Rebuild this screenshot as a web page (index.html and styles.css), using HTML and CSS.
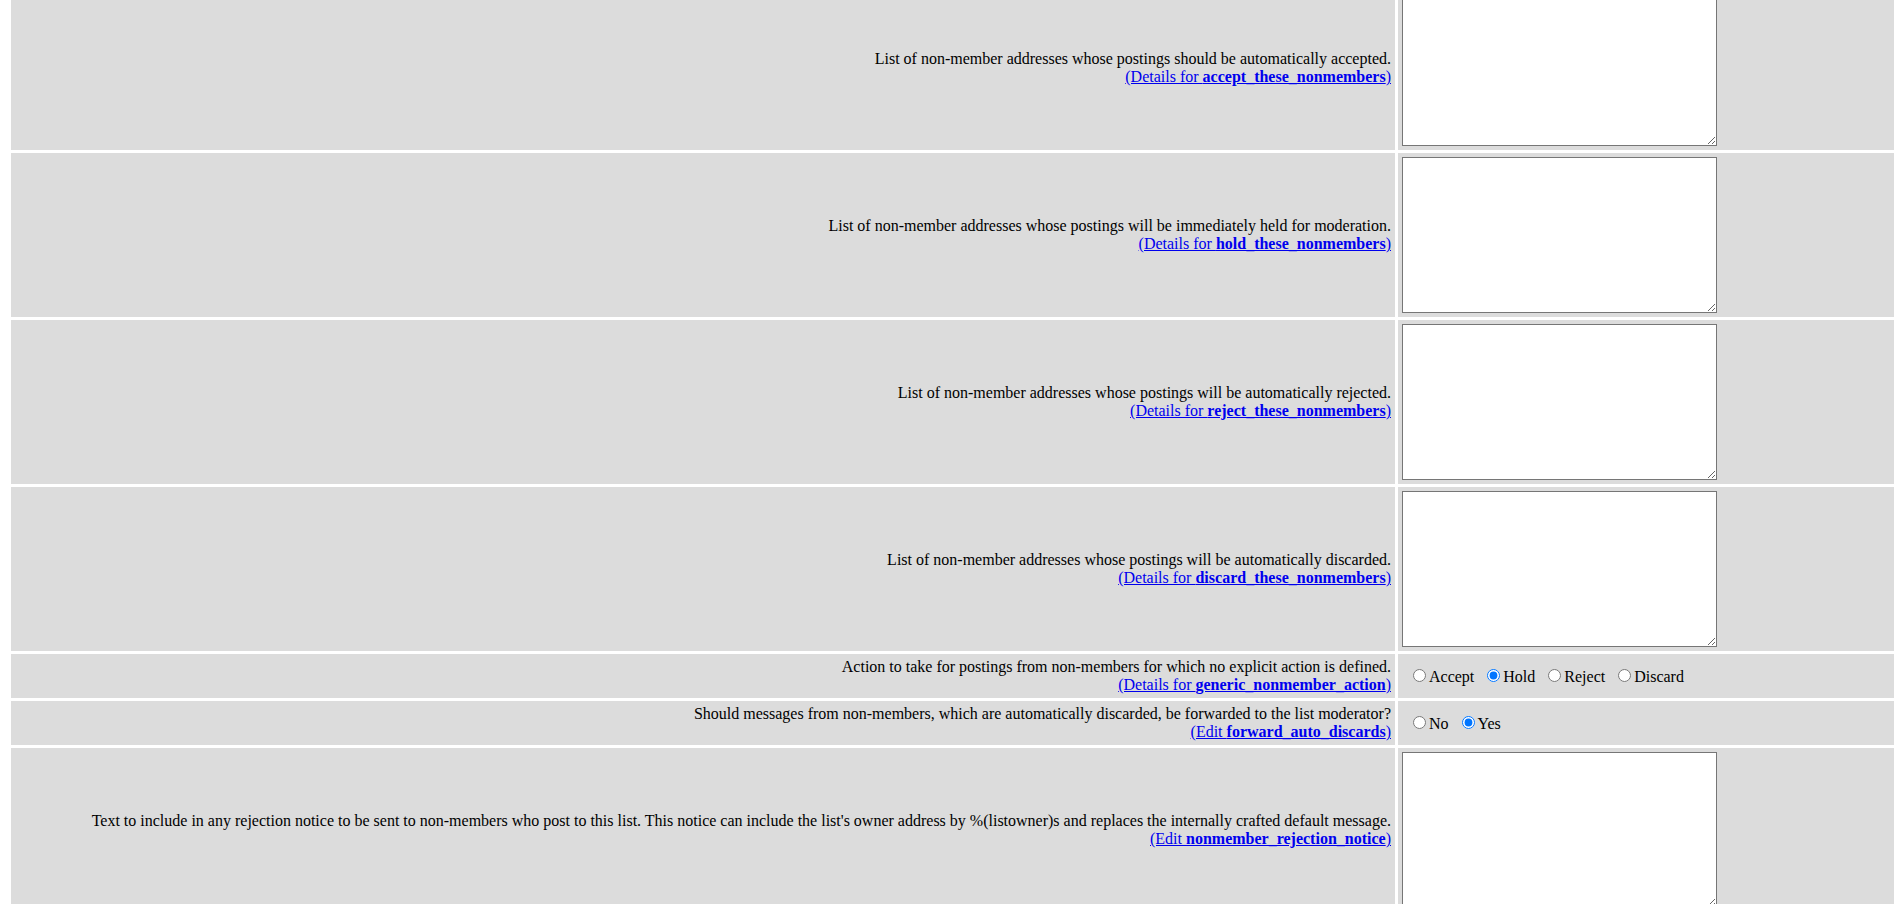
FILE: index.html
```html
<!DOCTYPE html>
<html>
<head>
<meta charset="utf-8">
<title>Privacy options</title>
<link rel="stylesheet" href="styles.css">
</head>
<body>
<table class="opts">
  <tr>
    <td class="label">List of non-member addresses whose postings should be automatically accepted.<br><a href="#">(Details for <strong>accept_these_nonmembers</strong>)</a></td>
    <td class="field"><textarea class="box"></textarea></td>
  </tr>
  <tr>
    <td class="label">List of non-member addresses whose postings will be immediately held for moderation.<br><a href="#">(Details for <strong>hold_these_nonmembers</strong>)</a></td>
    <td class="field"><textarea class="box"></textarea></td>
  </tr>
  <tr>
    <td class="label">List of non-member addresses whose postings will be automatically rejected.<br><a href="#">(Details for <strong>reject_these_nonmembers</strong>)</a></td>
    <td class="field"><textarea class="box"></textarea></td>
  </tr>
  <tr>
    <td class="label">List of non-member addresses whose postings will be automatically discarded.<br><a href="#">(Details for <strong>discard_these_nonmembers</strong>)</a></td>
    <td class="field"><textarea class="box"></textarea></td>
  </tr>
  <tr>
    <td class="label">Action to take for postings from non-members for which no explicit action is defined.<br><a href="#">(Details for <strong>generic_nonmember_action</strong>)</a></td>
    <td class="field"><span class="choices"><input type="radio" name="gna" value="0">Accept&nbsp; <input type="radio" name="gna" value="1" checked>Hold&nbsp; <input type="radio" name="gna" value="2">Reject&nbsp; <input type="radio" name="gna" value="3">Discard</span></td>
  </tr>
  <tr>
    <td class="label">Should messages from non-members, which are automatically discarded, be forwarded to the list moderator?<br><a href="#">(Edit <strong>forward_auto_discards</strong>)</a></td>
    <td class="field"><span class="choices"><input type="radio" name="fad" value="0">No&nbsp; <input type="radio" name="fad" value="1" checked>Yes</span></td>
  </tr>
  <tr>
    <td class="label">Text to include in any rejection notice to be sent to non-members who post to this list. This notice can include the list's owner address by %(listowner)s and replaces the internally crafted default message.<br><a href="#">(Edit <strong>nonmember_rejection_notice</strong>)</a></td>
    <td class="field"><textarea class="box"></textarea></td>
  </tr>
</table>
</body>
</html>
```

FILE: styles.css
```css
html, body {
  margin: 0;
  padding: 0;
  background: #ffffff;
}

body {
  font-family: "Liberation Serif", "Times New Roman", serif;
  font-size: 16px;
  color: #000000;
  overflow: hidden;
}

.opts {
  border-collapse: separate;
  border-spacing: 3px;
  margin: -17px 4px 0 8px;
}

.opts td {
  background: #dcdcdc;
  padding: 4px;
  vertical-align: middle;
}

.label {
  width: 1376px;
  text-align: right;
  line-height: 18px;
}

.label a {
  color: #0000ee;
  text-decoration: underline;
}

.label strong {
  font-weight: bold;
}

.field {
  width: 488px;
  text-align: left;
}

.box {
  display: block;
  box-sizing: border-box;
  width: 315px;
  height: 156px;
  margin: 0;
  background: #ffffff;
}

.choices {
  padding-left: 6px;
  line-height: 18px;
}

.choices input {
  margin: 3px 3px 0 5px;
}
```
